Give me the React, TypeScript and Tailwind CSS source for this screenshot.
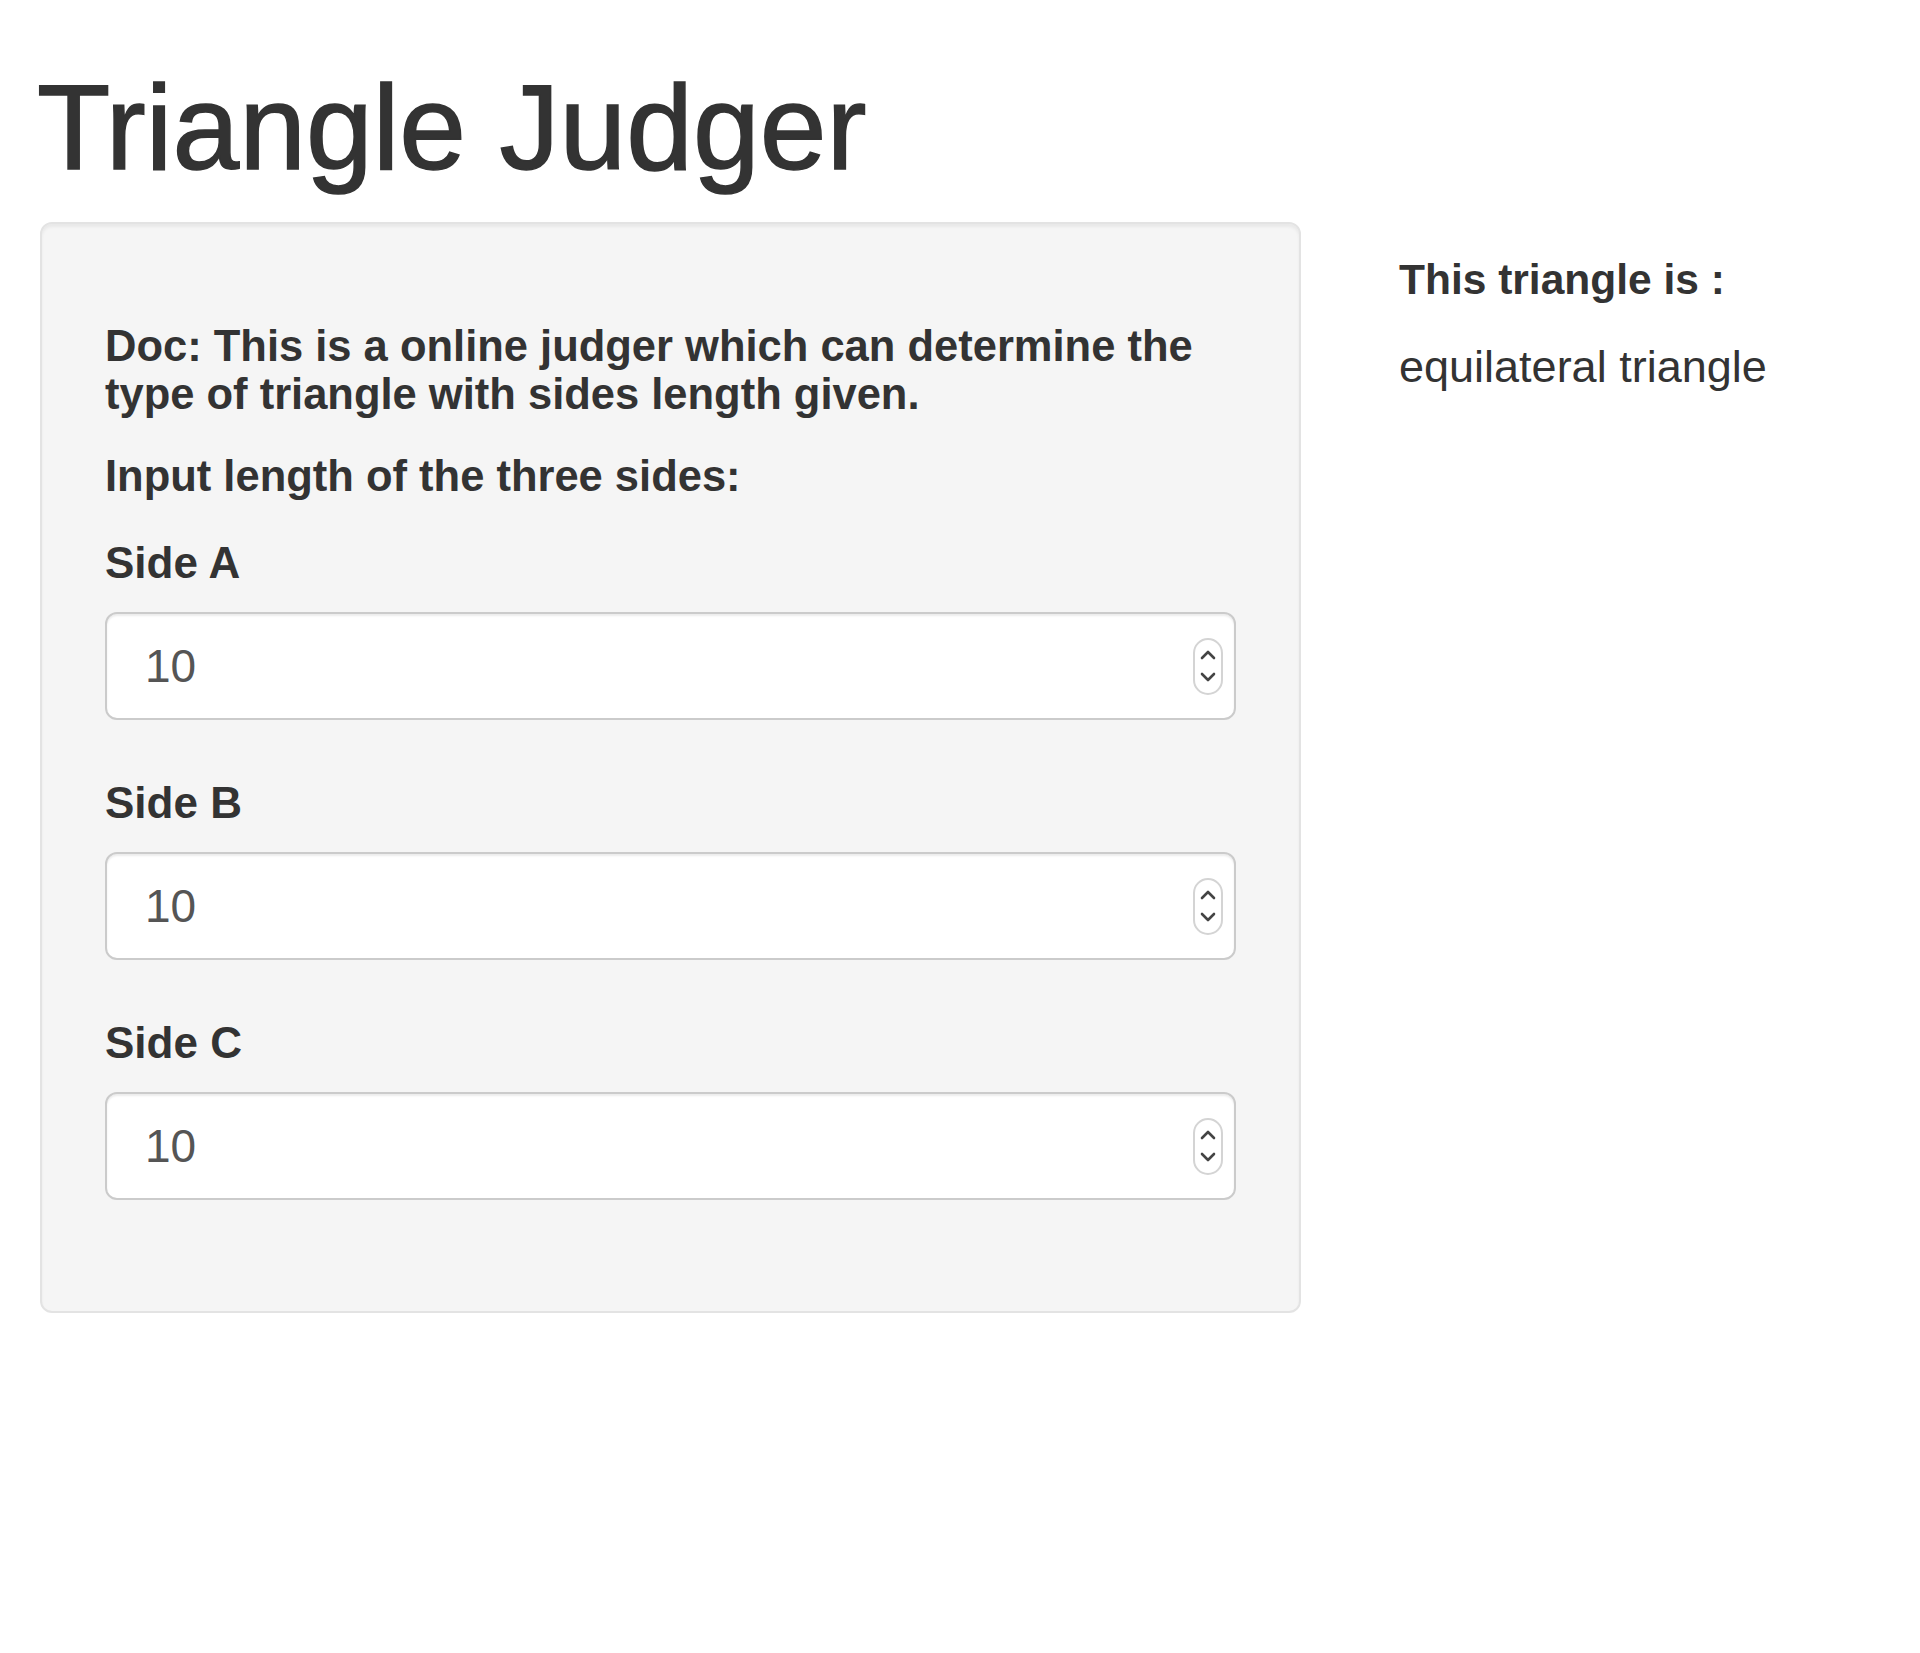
import React from 'react'

const sides = ['Side A', 'Side B', 'Side C']

function Spinner() {
  return (
    <div className="flex h-[57px] w-[30px] shrink-0 items-center justify-center rounded-full border-2 border-[#d4d4d4] bg-white">
      <svg width="16" height="40" viewBox="0 0 16 40" fill="none" stroke="#444" strokeWidth="2.6" strokeLinecap="round" strokeLinejoin="round">
        <path d="M2 12 L8 6 L14 12" />
        <path d="M2 28 L8 34 L14 28" />
      </svg>
    </div>
  )
}

function NumberField({ label, first }: { label: string; first?: boolean }) {
  return (
    <div className={first ? 'mt-[39px]' : 'mt-[59px]'}>
      <label className="block text-[44px] font-bold leading-[48px]">{label}</label>
      <div className="mt-[25px] flex h-[108px] items-center rounded-[12px] border-2 border-[#cbcbcb] bg-white pl-[38px] pr-[11px] shadow-[inset_0_2px_2px_rgba(0,0,0,0.075)]">
        <input
          type="text"
          defaultValue="10"
          className="min-w-0 flex-1 bg-transparent text-[46px] leading-[52px] text-[#555] outline-none"
        />
        <Spinner />
      </div>
    </div>
  )
}

export default function App() {
  return (
    <div className="min-h-screen bg-white pl-[40px] font-['Liberation_Sans',Arial,sans-serif] text-[#333]">
      <h1 className="-ml-[3px] pt-[62px] text-[120px] font-normal leading-[131px] [-webkit-text-stroke:1.5px_#333]">
        Triangle Judger
      </h1>

      <div className="mt-[29px] flex items-start">
        <div className="w-[1261px] rounded-[12px] border-2 border-[#e3e3e3] bg-[#f5f5f5] px-[63px] pb-[111px] pt-[98px] shadow-[inset_0_3px_3px_rgba(0,0,0,0.05)]">
          <p className="text-[43.5px] font-bold leading-[48px]">
            Doc: This is a online judger which can determine the type of triangle with sides length given.
          </p>
          <p className="mt-[34px] text-[43.5px] font-bold leading-[48px]">Input length of the three sides:</p>
          {sides.map((s, i) => (
            <NumberField key={s} label={s} first={i === 0} />
          ))}
        </div>

        <div className="ml-[98px] pt-[34px]">
          <h4 className="text-[42.5px] font-bold leading-[48px]">This triangle is :</h4>
          <p className="mt-[39px] text-[45px] leading-[48px]">equilateral triangle</p>
        </div>
      </div>
    </div>
  )
}
